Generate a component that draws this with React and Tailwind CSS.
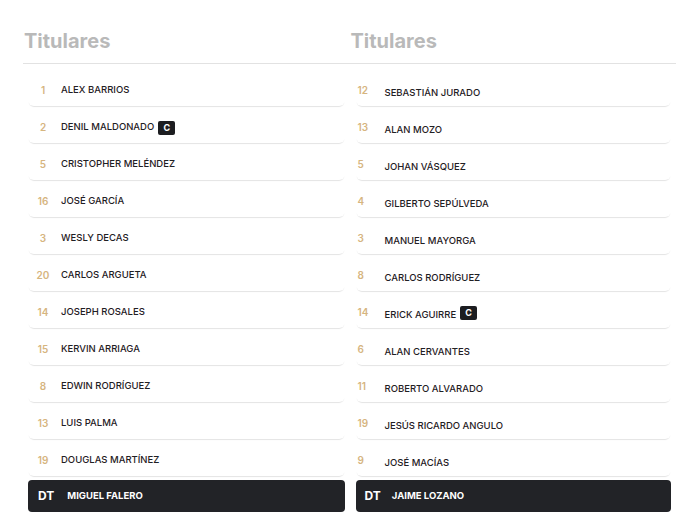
import React from "react";

const home = [
  ["1", "ALEX BARRIOS"],
  ["2", "DENIL MALDONADO", true],
  ["5", "CRISTOPHER MELÉNDEZ"],
  ["16", "JOSÉ GARCÍA"],
  ["3", "WESLY DECAS"],
  ["20", "CARLOS ARGUETA"],
  ["14", "JOSEPH ROSALES"],
  ["15", "KERVIN ARRIAGA"],
  ["8", "EDWIN RODRÍGUEZ"],
  ["13", "LUIS PALMA"],
  ["19", "DOUGLAS MARTÍNEZ"],
];

const away = [
  ["12", "SEBASTIÁN JURADO"],
  ["13", "ALAN MOZO"],
  ["5", "JOHAN VÁSQUEZ"],
  ["4", "GILBERTO SEPÚLVEDA"],
  ["3", "MANUEL MAYORGA"],
  ["8", "CARLOS RODRÍGUEZ"],
  ["14", "ERICK AGUIRRE", true],
  ["6", "ALAN CERVANTES"],
  ["11", "ROBERTO ALVARADO"],
  ["19", "JESÚS RICARDO ANGULO"],
  ["9", "JOSÉ MACÍAS"],
];

const Captain = ({ raised }) => (
  <span
    className={
      "ml-[4px] inline-flex h-[14px] w-[17px] items-center justify-center rounded-[2px] bg-[#1c1d20] text-[9px] font-bold text-white " +
      (raised ? "-translate-y-[3px]" : "")
    }
  >
    C
  </span>
);

const Column = ({ players, coach, alt }) => (
  <div>
    <h2 className="border-b border-[#e2e2e2] pb-[9px] pt-[2px] pl-[1px] text-[20px] font-bold leading-[26px] text-[#b9b9b9]">
      Titulares
    </h2>
    <div className={alt ? "pt-[7px] pl-[6px] pr-[5px]" : "pt-[7px] pl-[5px] pr-[5px]"}>
      {players.map(([num, name, cap]) => (
        <div
          key={name}
          className="mb-[2px] flex h-[35px] items-center rounded-[6px] bg-white shadow-[0_2px_1px_-1px_rgba(0,0,0,0.11)]"
        >
          {alt ? (
            <div className="flex translate-y-[5px] items-center pl-[2px]">
              <span className="w-[27px] -translate-y-[3px] text-[10px] font-semibold text-[#d6b57f]">{num}</span>
              <span className="text-[9.5px] font-medium text-[#1f2024]">{name}</span>
              {cap && <Captain raised />}
            </div>
          ) : (
            <div className="flex translate-y-[2px] items-center pl-[8px]">
              <span className="w-[14px] text-center text-[10px] font-semibold text-[#d6b57f]">{num}</span>
              <span className="ml-[11px] text-[9.5px] font-medium text-[#1f2024]">{name}</span>
              {cap && <Captain />}
            </div>
          )}
        </div>
      ))}
      <div className="mt-[4px] flex h-[32px] items-center rounded-[4px] bg-[#222327] text-white">
        <span className={alt ? "pl-[9px] text-[12px] font-bold" : "pl-[10px] text-[12px] font-bold"}>DT</span>
        <span className={alt ? "ml-[11px] text-[9.5px] font-bold" : "ml-[13px] text-[9.5px] font-bold"}>{coach}</span>
      </div>
    </div>
  </div>
);

export default function App() {
  return (
    <div className="min-h-[527px] bg-white font-['Inter',sans-serif]">
      <div className="ml-[23px] grid w-[653px] grid-cols-2 pt-[26px]">
        <Column players={home} coach="MIGUEL FALERO" />
        <Column players={away} coach="JAIME LOZANO" alt />
      </div>
    </div>
  );
}
